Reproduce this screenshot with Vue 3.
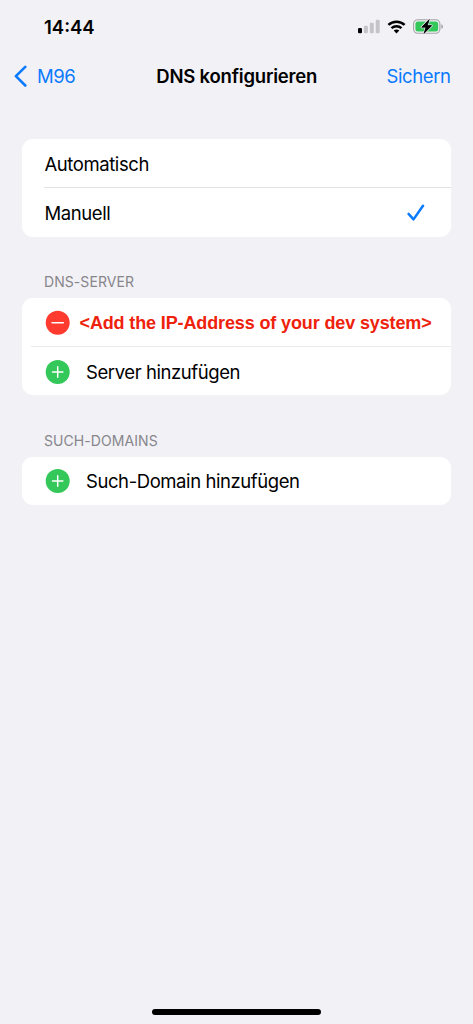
<script setup>
const domains = ['Such-Domain hinzufügen']
</script>

<template>
  <div class="screen">
    <header class="status">
      <span class="time">14:44</span>
      <div class="indicators">
        <svg class="signal" width="22" height="15" viewBox="0 0 22 15">
          <rect x="0" y="9" width="4" height="5.3" rx="1.3" fill="#000" />
          <rect x="5.9" y="6.7" width="4" height="7.6" rx="1.2" fill="#c5c5c9" />
          <rect x="11.8" y="3.7" width="4" height="10.6" rx="1.2" fill="#c5c5c9" />
          <rect x="17.7" y="0.7" width="4" height="13.6" rx="1.2" fill="#c5c5c9" />
        </svg>
        <svg class="wifi" width="19" height="14" viewBox="0 0 19 14">
          <path d="M1.4 4.9C5.9 .6 13.1 .6 17.6 4.9" fill="none" stroke="#000" stroke-width="2.5" />
          <path d="M4.5 8.2C7.3 5.5 11.7 5.5 14.5 8.2" fill="none" stroke="#000" stroke-width="2.4" />
          <path d="M6.7 10.5C8.2 9.1 10.8 9.1 12.3 10.5L9.5 13.4Z" fill="#000" />
        </svg>
        <svg class="battery" width="31" height="17" viewBox="0 0 31 17">
          <rect x=".6" y="1.7" width="26.3" height="13.6" rx="4.2" fill="none" stroke="#a3a3a8" stroke-width="1.1" />
          <path d="M28.3 6.2C30.6 7 30.6 10 28.3 10.8Z" fill="#a3a3a8" />
          <rect x="2.4" y="3.4" width="22.8" height="10.2" rx="2.5" fill="#34c759" />
          <path d="M16.3 1.4L8.6 9.3H13L10.9 15.6L18.8 7.6H14.3Z" fill="#000" stroke="#f2f1f6" stroke-width="2" paint-order="stroke" stroke-linejoin="round" />
          <path d="M16.3 1.4L8.6 9.3H13L10.9 15.6L18.8 7.6H14.3Z" fill="#000" stroke="#000" stroke-width=".5" />
        </svg>
      </div>
    </header>

    <nav class="nav">
      <a class="back">
        <svg width="14" height="22" viewBox="0 0 14 22">
          <path d="M12.3 1.9L2.9 11.2L12.3 20.5" fill="none" stroke="#0a7aff" stroke-width="2.6" stroke-linecap="round" stroke-linejoin="round" />
        </svg>
        <span class="back-label">M96</span>
      </a>
      <h1 class="title">DNS konfigurieren</h1>
      <a class="save">Sichern</a>
    </nav>

    <main class="content">
      <section class="card mode">
        <div class="row"><span class="option">Automatisch</span></div>
        <div class="row line">
          <span class="option">Manuell</span>
          <svg class="check" width="18" height="18" viewBox="0 0 18 18">
            <path d="M1.6 9.9L6.5 15.4L16 1.8" fill="none" stroke="#0a7aff" stroke-width="2.5" stroke-linecap="round" stroke-linejoin="round" />
          </svg>
        </div>
      </section>

      <h2 class="heading">DNS-SERVER</h2>
      <section class="card servers">
        <div class="row">
          <svg class="badge" width="24" height="24" viewBox="0 0 24 24">
            <circle cx="11.7" cy="11.7" r="12" fill="#ff3b30" />
            <path d="M6.1 11.7H17.3" stroke="#fff" stroke-width="1.6" stroke-linecap="round" />
          </svg>
          <span class="note">&lt;Add the IP-Address of your dev system&gt;</span>
        </div>
        <div class="row line wide">
          <svg class="badge" width="24" height="24" viewBox="0 0 24 24">
            <circle cx="11.7" cy="12" r="12" fill="#34c759" />
            <path d="M6.5 12H16.9M11.7 6.8V17.2" stroke="#fff" stroke-width="1.5" stroke-linecap="round" />
          </svg>
          <span class="action">Server hinzufügen</span>
        </div>
      </section>

      <h2 class="heading">SUCH-DOMAINS</h2>
      <section class="card domains">
        <div v-for="d in domains" :key="d" class="row">
          <svg class="badge" width="24" height="24" viewBox="0 0 24 24">
            <circle cx="11.7" cy="12" r="12" fill="#34c759" />
            <path d="M6.5 12H16.9M11.7 6.8V17.2" stroke="#fff" stroke-width="1.5" stroke-linecap="round" />
          </svg>
          <span class="action">{{ d }}</span>
        </div>
      </section>
    </main>

    <footer class="home"><div class="home-bar"></div></footer>
  </div>
</template>

<style>
body {
  background: #f2f1f6;
}
</style>

<style scoped>
.screen {
  box-sizing: border-box;
  height: 1024px;
  display: flex;
  flex-direction: column;
  background: #f2f1f6;
  color: #000;
  font-family: Inter, "Liberation Sans", sans-serif;
  font-size: 18.5px;
  letter-spacing: -0.42px;
  white-space: nowrap;
  overflow: hidden;
}
.status {
  height: 53px;
  display: flex;
  align-items: center;
  justify-content: space-between;
  padding: 0 29px 0 44px;
  box-sizing: border-box;
}
.time {
  font-size: 18.5px;
  font-weight: 600;
  letter-spacing: 0;
}
.indicators {
  display: flex;
  align-items: center;
}
.wifi,
.battery {
  margin-left: 7px;
}
.nav {
  height: 46px;
  display: grid;
  grid-template-columns: 1fr auto 1fr;
  align-items: center;
  padding: 0 22.5px 0 13px;
}
.back {
  display: flex;
  align-items: center;
  color: #0a7aff;
}
.back-label {
  margin-left: 10px;
}
.title {
  margin: 0 0 0 10px;
  font-size: 18.5px;
  font-weight: 600;
  letter-spacing: -0.2px;
}
.save {
  justify-self: end;
  color: #0a7aff;
}
.content {
  flex: 1;
  padding: 40px 22px 0;
}
.card {
  height: 97.5px;
  background: #fff;
  border-radius: 11px;
  overflow: hidden;
}
.servers {
  height: 97px;
}
.domains {
  height: 48px;
}
.row {
  box-sizing: border-box;
  height: 48px;
  display: flex;
  align-items: center;
  padding-left: 22px;
  padding-top: 1px;
  background-repeat: no-repeat;
}
.line {
  height: 49.5px;
  padding-top: 2px;
  background-image: linear-gradient(#e2e2e4, #e2e2e4);
  background-size: calc(100% - 22px) 1px;
  background-position: right top;
}
.wide {
  background-image: linear-gradient(#ebebed, #ebebed);
  background-size: calc(100% - 9px) 1px;
}
.domains .row {
  padding-top: 0;
}
.mode .line {
  justify-content: space-between;
  padding-right: 26px;
}
.heading {
  margin: 0;
  height: 61.5px;
  box-sizing: border-box;
  padding: 36.5px 0 0 22px;
  font-size: 14px;
  line-height: 18px;
  font-weight: 400;
  letter-spacing: 0.07px;
  color: #87868b;
}
.servers + .heading {
  height: 62px;
}
.badge {
  flex: none;
  margin-left: 2px;
  overflow: visible;
}
.note {
  margin-left: 9.5px;
  padding-top: 1px;
  font-family: "Liberation Sans", sans-serif;
  font-weight: 700;
  font-size: 18px;
  letter-spacing: -0.13px;
  color: #ee220c;
}
.option {
  padding-left: 0.5px;
}
.action {
  margin-left: 16px;
}
.home {
  display: flex;
  justify-content: center;
  height: 15px;
}
.home-bar {
  width: 169px;
  height: 6px;
  border-radius: 3px;
  background: #000;
}
</style>
